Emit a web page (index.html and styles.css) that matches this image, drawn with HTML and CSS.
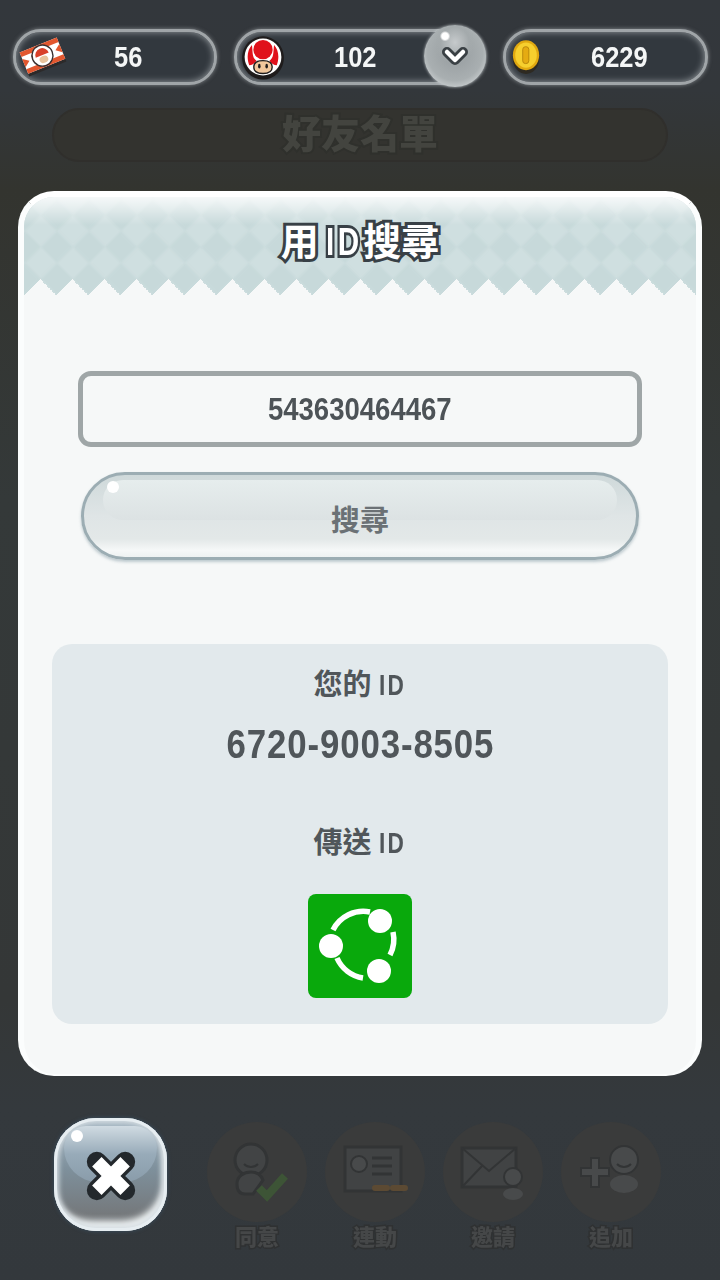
FILE: index.html
```html
<!DOCTYPE html>
<html lang="zh-Hant">
<head>
    <meta charset="UTF-8">
    <title>用ID搜尋</title>
    <link rel="stylesheet" href="styles.css">
</head>
<body>
    <div class="topbar">
        <div class="pill pill-ticket">
            <svg class="pill-icon ticket" viewBox="0 0 48 48">
                <g transform="rotate(-22 24 24)">
                    <rect x="4" y="14" width="40" height="23" fill="#2c2a2a"/>
                    <rect x="4" y="11" width="40" height="23" fill="#fff"/>
                    <path d="M4 11h40v5H4zM4 29h40v5H4z" fill="#e2572f"/>
                    <path d="M4 18l6 4.500-6 4.500zM44 18l-6 4.500 6 4.500z" fill="#e2572f"/>
                    <circle cx="24" cy="22.500" r="10.500" fill="#fff" stroke="#3a3030" stroke-width="1.400"/>
                    <path d="M17 22a7 7 0 0 1 14 0z" fill="#d8402a"/>
                    <ellipse cx="24" cy="26.500" rx="4.500" ry="3.500" fill="#e8c39c"/>
                </g>
            </svg>
            <span class="pill-num">56</span>
        </div>
        <div class="pill pill-lives">
            <svg class="pill-icon toad" viewBox="0 0 50 50">
                <circle cx="25" cy="27" r="22.500" fill="#1f1c1c"/>
                <circle cx="25" cy="25" r="22.500" fill="#1f1c1c"/>
                <circle cx="25" cy="25" r="20" fill="#fff"/>
                <path d="M10 34C7 26 8 17 13 12c1 8 0 14 5 17-2 3-5 5-8 5zM40 34c3-8 2-17-3-22-1 8 0 14-5 17 2 3 5 5 8 5z" fill="#e0111b"/>
                <circle cx="25" cy="17" r="10.500" fill="#e0111b"/>
                <path d="M15 36c0-5 4-7 10-7s10 2 10 7-4 7-10 7-10-2-10-7z" fill="#f1c79c" stroke="#1f1c1c" stroke-width="1.500"/>
                <ellipse cx="21" cy="35" rx="1.400" ry="2.600" fill="#1f1c1c"/>
                <ellipse cx="29" cy="35" rx="1.400" ry="2.600" fill="#1f1c1c"/>
            </svg>
            <span class="pill-num">102</span>
            <div class="bubble">
                <svg class="chevron" viewBox="0 0 30 22">
                    <path d="M7 6l8 8 8-8" fill="none" stroke="#3a4044" stroke-width="10" stroke-linecap="round" stroke-linejoin="round"/>
                    <path d="M7 6l8 8 8-8" fill="none" stroke="#fff" stroke-width="4.500" stroke-linecap="round" stroke-linejoin="round"/>
                </svg>
            </div>
        </div>
        <div class="pill pill-coins">
            <svg class="pill-icon coin" viewBox="0 0 32 40">
                <ellipse cx="16" cy="22" rx="14" ry="16" fill="#2e2a22"/>
                <ellipse cx="16" cy="18" rx="14" ry="16" fill="#e0a810"/>
                <ellipse cx="16" cy="18" rx="11.500" ry="13.500" fill="#f6cf2e"/>
                <rect x="12.500" y="9" width="6.500" height="18" rx="3" fill="#e5ab12" stroke="#b8860c"/>
            </svg>
            <span class="pill-num">6229</span>
        </div>
    </div>

    <div class="ghost-title"><span>好友名單</span></div>

    <div class="dialog">
        <div class="dialog-head">
            <h1>用<span class="latin">ID</span>搜尋</h1>
        </div>
        <div class="dialog-body">
            <div class="id-input"><span>543630464467</span></div>
            <div class="search-btn"><span>搜尋</span></div>
            <div class="my-id">
                <div class="my-id-label">您的<span class="latin">ID</span></div>
                <div class="my-id-value">6720-9003-8505</div>
                <div class="my-id-label send-label">傳送<span class="latin">ID</span></div>
                <div class="share-btn">
                    <svg viewBox="0 0 104 104">
                        <path d="M25 36A34 34 0 0 1 62 18M85 38A34 34 0 0 1 82 61M29 64A34 34 0 0 0 55 84" fill="none" stroke="#fff" stroke-width="5.500"/>
                        <circle cx="72" cy="27" r="12" fill="#fff"/>
                        <circle cx="23" cy="52" r="12" fill="#fff"/>
                        <circle cx="71" cy="77" r="12" fill="#fff"/>
                    </svg>
                </div>
            </div>
        </div>
    </div>

    <div class="bottombar">
        <div class="close-btn">
            <svg class="close-x" viewBox="0 0 60 60">
                <path d="M13 13l34 34M47 13L13 47" fill="none" stroke="#23282c" stroke-width="24" stroke-linecap="round"/>
                <path d="M13 13l34 34M47 13L13 47" fill="none" stroke="#fff" stroke-width="16"/>
            </svg>
        </div>
        <div class="ghost-actions">
            <div class="ghost-item">
                <div class="ghost-circle">
                    <svg viewBox="0 0 100 100">
                        <circle cx="44" cy="38" r="16" fill="#424445" stroke="#323435" stroke-width="3"/>
                        <path d="M37 42c4 4 10 4 14 0" fill="none" stroke="#323435" stroke-width="2"/>
                        <path d="M30 62c0-8 7-12 14-12s10 3 12 8L46 72H38c-6 0-8-4-8-10z" fill="#424445" stroke="#323435" stroke-width="3"/>
                        <path d="M52 66l8 8 18-20" fill="none" stroke="#3d5436" stroke-width="8"/>
                    </svg>
                </div>
                <span>同意</span>
            </div>
            <div class="ghost-item">
                <div class="ghost-circle">
                    <svg viewBox="0 0 100 100">
                        <rect x="20" y="25" width="56" height="44" fill="#414344" stroke="#323435" stroke-width="3"/>
                        <circle cx="34" cy="42" r="8" fill="#484a4b" stroke="#323435" stroke-width="2"/>
                        <path d="M47 36h20M47 44h20M47 52h20" stroke="#323435" stroke-width="3"/>
                        <path d="M50 66h12M68 66h12" stroke="#5c4a33" stroke-width="6" stroke-linecap="round"/>
                    </svg>
                </div>
                <span>連動</span>
            </div>
            <div class="ghost-item">
                <div class="ghost-circle">
                    <svg viewBox="0 0 100 100">
                        <rect x="19" y="26" width="54" height="39" fill="#414344" stroke="#323435" stroke-width="3"/>
                        <path d="M19 26l27 23 27-23M19 65l20-21" fill="none" stroke="#323435" stroke-width="2"/>
                        <circle cx="70" cy="55" r="9" fill="#484a4b" stroke="#323435" stroke-width="2"/>
                        <ellipse cx="70" cy="72" rx="10" ry="6" fill="#484a4b"/>
                    </svg>
                </div>
                <span>邀請</span>
            </div>
            <div class="ghost-item">
                <div class="ghost-circle">
                    <svg viewBox="0 0 100 100">
                        <path d="M20 46h10V36h8v10h10v8H38v11h-8V54H20z" fill="#484a4b" stroke="#323435" stroke-width="2"/>
                        <circle cx="63" cy="38" r="14" fill="#484a4b" stroke="#323435" stroke-width="2"/>
                        <path d="M56 42c4 4 10 4 14 0" fill="none" stroke="#323435" stroke-width="2"/>
                        <ellipse cx="63" cy="62" rx="14" ry="9" fill="#484a4b"/>
                    </svg>
                </div>
                <span>追加</span>
            </div>
        </div>
    </div>
</body>
</html>
```
FILE: styles.css
```css
* {
    box-sizing: border-box;
}

body {
    margin: 0;
    width: 720px;
    height: 1280px;
    overflow: hidden;
    font-family: "Noto Sans CJK TC", sans-serif;
    background: linear-gradient(180deg, #33373c 0, #33373b 90px, #33342f 190px, #343939 500px, #343737 1000px, #34393d 1110px, #33383c 1280px);
}

/* the game font is narrow, Liberation Sans squeezed comes closest */
.latin {
    display: inline-block;
    font-family: "Liberation Sans", sans-serif;
    font-size: 1.040em;
    font-weight: 700;
    letter-spacing: 0.1em;
    margin: 0 -0.3em 0 0.26em;
    transform: scaleX(0.75);
    transform-origin: left center;
}

/* top counters */
.topbar {
    display: flex;
    gap: 17px;
    padding: 29px 13px 0;
}

.pill {
    position: relative;
    flex: none;
    display: flex;
    align-items: center;
    width: 204px;
    height: 56px;
    border-radius: 28px;
    border: 3px solid #a0a5a8;
    background: #32383e;
    box-shadow: 0 0 4px rgba(220, 225, 228, 0.5), inset 0 0 7px rgba(220, 225, 228, 0.6);
}

.pill-lives {
    width: 252px;
}

.pill-coins {
    width: 205px;
}

.pill-num {
    position: absolute;
    top: 9px;
    font-family: "Liberation Sans", sans-serif;
    font-size: 30px;
    line-height: 32px;
    font-weight: 700;
    color: #f4f6f6;
    transform: scaleX(0.85);
    transform-origin: left center;
}

.pill-ticket .pill-num {
    left: 98px;
}

.pill-lives .pill-num {
    left: 97px;
}

.pill-coins .pill-num {
    left: 85px;
}

.pill-icon {
    flex: none;
}

.ticket {
    width: 48px;
    height: 48px;
    margin-left: 3px;
}

.toad {
    width: 46px;
    height: 46px;
    margin-left: 3px;
}

.coin {
    width: 30px;
    height: 38px;
    margin-left: 5px;
}

.bubble {
    position: absolute;
    right: -3px;
    top: -7px;
    width: 62px;
    height: 62px;
    border-radius: 50%;
    display: flex;
    align-items: center;
    justify-content: center;
    background:
        radial-gradient(circle at 34% 18%, #fff 0, #fff 5%, transparent 8%),
        radial-gradient(ellipse 20px 22px at 50% 28%, #c6cacc 0, #a4aaac 70%, transparent 100%),
        radial-gradient(circle at 50% 45%, #959b9e 0, #a9afb1 60%, #eef1f2 100%);
    box-shadow: 0 0 3px rgba(230, 235, 238, 0.7);
}

.chevron {
    width: 30px;
    height: 22px;
    margin-top: 2px;
}

/* dimmed friend list behind the dialog */
.ghost-title {
    display: flex;
    align-items: center;
    justify-content: center;
    width: 616px;
    height: 54px;
    margin: 23px 0 0 52px;
    border-radius: 27px;
    border: 2px solid #302f2c;
    background: #33332f;
}

.ghost-title span {
    margin-top: -8px;
    font-size: 39px;
    line-height: 44px;
    font-weight: 900;
    color: #43443f;
    -webkit-text-stroke: 4px #2f302c;
    paint-order: stroke fill;
    filter: blur(0.6px);
}

/* dialog */
.dialog {
    width: 684px;
    height: 885px;
    margin: 29px 0 0 18px;
    border-radius: 36px;
    border: 6px solid #fbfdfd;
    border-top-color: #fff;
    border-bottom-width: 2px;
    background: #f6f8f8;
    overflow: hidden;
}

.dialog-head {
    position: relative;
    height: 98px;
    overflow: hidden;
    display: flex;
    justify-content: center;
    padding-top: 17px;
    background: #cfdfe0;
}

/* diamond checks, turned 45deg, with a dark one ending in each tooth */
.dialog-head::before {
    content: "";
    position: absolute;
    left: -451px;
    top: -418px;
    width: 1000px;
    height: 1000px;
    transform: rotate(45deg);
    background: conic-gradient(#c7d9da 25%, transparent 0 50%, #c7d9da 0 75%, transparent 0) center / 45.25px 45.25px;
    filter: blur(0.8px);
}

.dialog-head::after {
    content: "";
    position: absolute;
    inset: 0;
    background:
        conic-gradient(from 135deg at 50% 0, #f6f8f8 90deg, transparent 0) 0 100% / 32px 16px repeat-x,
        linear-gradient(180deg, rgba(255, 255, 255, 0.8) 0, rgba(255, 255, 255, 0) 28px);
}

.dialog-head h1 {
    position: relative;
    z-index: 1;
    margin: 0;
    font-size: 38px;
    line-height: 50px;
    font-weight: 700;
    color: #fff;
    -webkit-text-stroke: 6px #384046;
    paint-order: stroke fill;
}

.dialog-head .latin {
    letter-spacing: 0.12em;
    margin: 0 -0.3em 0 0.18em;
}

.dialog-body {
    display: flex;
    flex-direction: column;
    align-items: center;
    padding-top: 76px;
}

.id-input {
    display: flex;
    justify-content: center;
    width: 564px;
    height: 76px;
    border: 5px solid #9fa6a7;
    border-radius: 13px;
    background: #f6f8f8;
}

.id-input span {
    font-family: "Liberation Sans", sans-serif;
    font-size: 32px;
    line-height: 66px;
    font-weight: 700;
    color: #4d5357;
    transform: scaleX(0.86);
}

.search-btn {
    position: relative;
    width: 558px;
    height: 88px;
    margin-top: 25px;
    padding-top: 4px;
    border-radius: 44px;
    border: 3px solid #9cadb3;
    display: flex;
    align-items: center;
    justify-content: center;
    background: linear-gradient(180deg, #cfd9da 0, #dfe5e6 50%, #e3e8e8 78%, #f6f8f8 92%, #eef2f2 100%);
    box-shadow: 0 2px 3px rgba(120, 145, 155, 0.45);
}

.search-btn::before {
    content: "";
    position: absolute;
    left: 19px;
    right: 19px;
    top: 5px;
    height: 40px;
    border-radius: 20px;
    background: linear-gradient(180deg, #e6eded 0, #dce2e3 100%);
}

.search-btn::after {
    content: "";
    position: absolute;
    left: 23px;
    top: 6px;
    width: 12px;
    height: 12px;
    border-radius: 50%;
    background: #fff;
}

.search-btn span {
    position: relative;
    z-index: 1;
    font-size: 29px;
    line-height: 40px;
    font-weight: 700;
    color: #6b7175;
}

.my-id {
    display: flex;
    flex-direction: column;
    align-items: center;
    width: 616px;
    height: 380px;
    margin-top: 84px;
    padding-top: 18px;
    border-radius: 20px;
    background: #e2e9ec;
}

.my-id-label {
    font-size: 29px;
    line-height: 40px;
    font-weight: 700;
    color: #50565a;
}

.my-id-value {
    margin-top: 16px;
    font-family: "Liberation Sans", sans-serif;
    font-size: 41px;
    line-height: 46px;
    font-weight: 700;
    letter-spacing: 1px;
    color: #50565a;
    transform: scaleX(0.85);
}

.send-label {
    margin-top: 53px;
}

.share-btn {
    width: 104px;
    height: 104px;
    margin-top: 31px;
    border-radius: 8px;
    background: #09a90c;
}

.share-btn svg {
    display: block;
}

/* bottom buttons */
.bottombar {
    display: flex;
    padding: 42px 0 0 54px;
}

.close-btn {
    position: relative;
    flex: none;
    width: 113px;
    height: 113px;
    border-radius: 42px;
    display: flex;
    align-items: center;
    justify-content: center;
    background: linear-gradient(180deg, #a8b9c5 0, #7e909c 45%, #75797c 85%, #8b9093 100%);
    box-shadow: inset 0 0 0 3px #e6edf1, inset 0 0 5px 5px #d5dde2, inset -4px -10px 6px 0 #eef2f3, 0 0 4px rgba(60, 90, 115, 0.7);
}

.close-btn::before {
    content: "";
    position: absolute;
    left: 10px;
    right: 10px;
    top: 8px;
    height: 56px;
    border-radius: 30px 30px 46px 46px;
    background: linear-gradient(180deg, #d0dbe2 0, #98abb9 50%, #8a9caa 100%);
}

.close-btn::after {
    content: "";
    position: absolute;
    left: 17px;
    top: 12px;
    width: 12px;
    height: 12px;
    border-radius: 50%;
    background: #fff;
}

.close-x {
    position: relative;
    z-index: 1;
    width: 50px;
    height: 50px;
    margin-top: 2px;
}

.ghost-actions {
    display: flex;
    gap: 18px;
    margin: 4px 0 0 40px;
}

.ghost-item {
    display: flex;
    flex-direction: column;
    align-items: center;
    width: 100px;
    filter: blur(0.7px);
}

.ghost-circle {
    width: 100px;
    height: 100px;
    border-radius: 50%;
    background: #3a3b3b;
}

.ghost-circle svg {
    display: block;
}

.ghost-item span {
    margin-top: -2px;
    font-size: 22px;
    line-height: 30px;
    font-weight: 900;
    color: #454748;
    -webkit-text-stroke: 3px #2f3132;
    paint-order: stroke fill;
}
```
